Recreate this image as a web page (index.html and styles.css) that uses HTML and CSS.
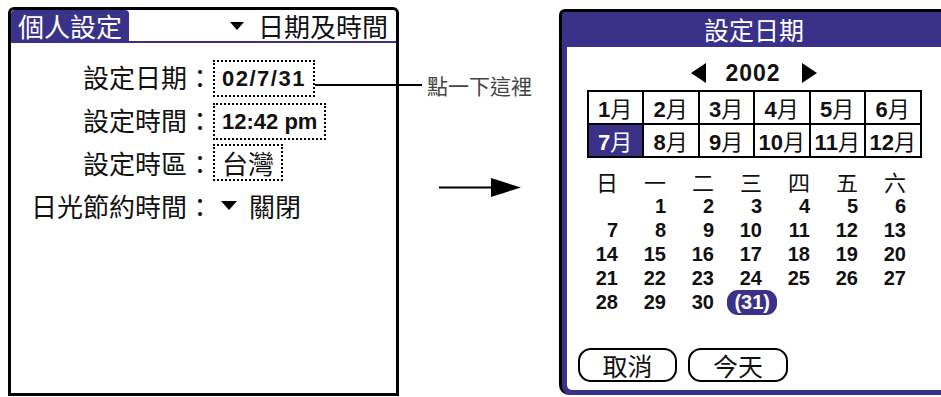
FILE: index.html
```html
<!DOCTYPE html>
<html lang="zh-Hant">
  <head>
    <meta charset="UTF-8" />
    <meta name="viewport" content="width=device-width, initial-scale=1.0" />
    <title>設定日期</title>
    <link rel="stylesheet" href="styles.css">
  </head>
  <body>
    <div class="panel">
      <div class="panel-head">
        <div class="tab">個人設定</div>
        <div class="menu"><span class="tri tri-head"></span>日期及時間</div>
      </div>
      <div class="form">
        <div class="label">設定日期：</div>
        <div class="value">
          <span class="field num num-date">02/7/31<span class="callout"><span class="callout-line"></span>點一下這裡</span></span>
        </div>

        <div class="label">設定時間：</div>
        <div class="value"><span class="field num">12:42 pm</span></div>

        <div class="label">設定時區：</div>
        <div class="value"><span class="field">台灣</span></div>

        <div class="label">日光節約時間：</div>
        <div class="value value-pick"><span class="tri"></span>關閉</div>
      </div>
    </div>

    <div class="middle">
      <svg class="arrow" width="82" height="19" viewBox="0 0 82 19">
        <line x1="0" y1="9.5" x2="54" y2="9.5" stroke="#000" stroke-width="2" />
        <polygon points="52,0 82,9.5 52,19" fill="#000" />
      </svg>
    </div>

    <div class="dialog">
      <div class="dialog-title">設定日期</div>
      <div class="dialog-body">
        <div class="year">
          <svg width="15" height="20" viewBox="0 0 15 20"><polygon points="15,0 0,10 15,20" fill="#000" /></svg>
          <b>2002</b>
          <svg width="15" height="20" viewBox="0 0 15 20"><polygon points="0,0 15,10 0,20" fill="#000" /></svg>
        </div>

        <div class="months">
          <div class="month"><b>1</b>月</div>
          <div class="month"><b>2</b>月</div>
          <div class="month"><b>3</b>月</div>
          <div class="month"><b>4</b>月</div>
          <div class="month"><b>5</b>月</div>
          <div class="month"><b>6</b>月</div>
          <div class="month on"><b>7</b>月</div>
          <div class="month"><b>8</b>月</div>
          <div class="month"><b>9</b>月</div>
          <div class="month"><b>10</b>月</div>
          <div class="month"><b>11</b>月</div>
          <div class="month"><b>12</b>月</div>
        </div>

        <div class="days">
          <div class="dn">日</div><div class="dn">一</div><div class="dn">二</div><div class="dn">三</div><div class="dn">四</div><div class="dn">五</div><div class="dn">六</div>
          <div class="day"></div><div class="day">1</div><div class="day">2</div><div class="day">3</div><div class="day">4</div><div class="day">5</div><div class="day">6</div>
          <div class="day">7</div><div class="day">8</div><div class="day">9</div><div class="day">10</div><div class="day">11</div><div class="day">12</div><div class="day">13</div>
          <div class="day">14</div><div class="day">15</div><div class="day">16</div><div class="day">17</div><div class="day">18</div><div class="day">19</div><div class="day">20</div>
          <div class="day">21</div><div class="day">22</div><div class="day">23</div><div class="day">24</div><div class="day">25</div><div class="day">26</div><div class="day">27</div>
          <div class="day">28</div><div class="day">29</div><div class="day">30</div><div class="day"><span class="sel">(31)</span></div>
        </div>

        <div class="buttons">
          <button type="button" class="btn">取消</button>
          <button type="button" class="btn btn-wide">今天</button>
        </div>
      </div>
    </div>
  </body>
</html>
```

FILE: styles.css
```css
body {
  font-family: "Noto Sans CJK TC", sans-serif;
  background-color: #ffffff;
  color: #111;
  margin: 0;
  padding: 0;
  display: flex;
  align-items: flex-start;
  width: 941px;
  height: 397px;
  overflow: hidden;
}

/* left: preferences screen */
.panel {
  flex: none;
  margin: 7px 0 0 8px;
  width: 391px;
  height: 389px;
  box-sizing: border-box;
  border: 3px solid #000;
  border-radius: 6px 6px 0 0;
}

.panel-head {
  display: flex;
  justify-content: space-between;
  align-items: center;
  height: 31px;
  border-bottom: 2px solid #3a3289;
}

.tab {
  background-color: #3a3289;
  color: #fff;
  height: 31px;
  line-height: 31px;
  padding: 0 7px;
  font-size: 26px;
  border-radius: 4px 4px 0 0;
}

.menu {
  display: flex;
  align-items: center;
  gap: 14px;
  font-size: 26px;
  line-height: 31px;
  margin-right: 8px;
}

.tri {
  display: inline-block;
  width: 0;
  height: 0;
  border-left: 8px solid transparent;
  border-right: 8px solid transparent;
  border-top: 9px solid #000;
}

.tri-head {
  border-left-width: 7px;
  border-right-width: 7px;
  border-top-width: 8px;
}

.form {
  display: grid;
  grid-template-columns: 202px auto;
  grid-auto-rows: 43px;
  align-items: center;
  margin-top: 12px;
  font-size: 26px;
}

.label {
  text-align: right;
}

.field {
  display: inline-block;
  position: relative;
  height: 33px;
  line-height: 33px;
  padding: 0 7px;
  border: 2px dotted #000;
}

.num {
  font-family: "Liberation Sans", sans-serif;
  font-weight: bold;
  font-size: 22px;
}

.num-date {
  letter-spacing: 1.5px;
}

.value-pick {
  display: flex;
  align-items: center;
  gap: 12px;
  margin-left: 8px;
}

.callout {
  position: absolute;
  left: calc(100% + 2px);
  top: 10px;
  display: flex;
  align-items: center;
  height: 26px;
  font-family: "Noto Sans CJK TC", sans-serif;
  font-weight: normal;
  font-size: 21px;
  letter-spacing: 0;
  color: #444;
  white-space: nowrap;
}

.callout-line {
  width: 107px;
  height: 2px;
  background-color: #000;
  margin-right: 5px;
}

/* middle arrow */
.middle {
  flex: none;
  width: 160px;
}

.arrow {
  display: block;
  margin: 178px 0 0 40px;
}

/* right: date picker dialog, cut off by the window edge */
.dialog {
  flex: none;
  margin-top: 9px;
  width: 382px;
  height: 386px;
  box-sizing: border-box;
  border-top: 3px solid #000;
  border-left: 3px solid #000;
  border-radius: 6px 0 0 10px;
  background-color: #3a3289;
  padding: 0 0 5px 5px;
  display: flex;
  flex-direction: column;
}

.dialog-title {
  flex: none;
  height: 35px;
  line-height: 35px;
  text-align: center;
  color: #fff;
  font-size: 25px;
}

.dialog-body {
  flex: 1;
  background-color: #fff;
  border-radius: 0 0 0 5px;
}

.year {
  display: flex;
  justify-content: center;
  align-items: center;
  height: 26px;
  margin-top: 13px;
}

.year b {
  font-family: "Liberation Sans", sans-serif;
  font-size: 23px;
  letter-spacing: 1px;
  margin: 0 21px 0 19px;
}

.months {
  display: grid;
  grid-template-columns: repeat(6, 1fr);
  grid-template-rows: 31px 31px;
  gap: 2px;
  padding: 2px;
  background-color: #000;
  width: 335px;
  box-sizing: border-box;
  margin: 4px auto 0;
}

.month {
  background-color: #fff;
  text-align: center;
  line-height: 31px;
  font-size: 22px;
}

.month b {
  font-family: "Liberation Sans", sans-serif;
}

.month.on {
  background-color: #3a3289;
  color: #fff;
}

.days {
  display: grid;
  grid-template-columns: repeat(7, 48px);
  grid-template-rows: 26px;
  grid-auto-rows: 24px;
  margin: 10px 0 0 3px;
}

.dn {
  text-align: right;
  font-size: 22px;
  line-height: 26px;
}

.day {
  text-align: right;
  font-family: "Liberation Sans", sans-serif;
  font-weight: bold;
  font-size: 20px;
  line-height: 24px;
}

.sel {
  display: inline-block;
  background-color: #3a3289;
  color: #fff;
  border-radius: 11px;
  padding: 0 7px;
  line-height: 25px;
  margin-right: -15px;
}

.buttons {
  display: flex;
  gap: 11px;
  margin: 34px 0 0 11px;
}

.btn {
  width: 99px;
  height: 34px;
  padding: 0;
  border: 2px solid #000;
  border-radius: 13px;
  background-color: #fff;
  color: #111;
  font-family: "Noto Sans CJK TC", sans-serif;
  font-size: 25px;
  line-height: 30px;
}

.btn-wide {
  width: 100px;
}
```
